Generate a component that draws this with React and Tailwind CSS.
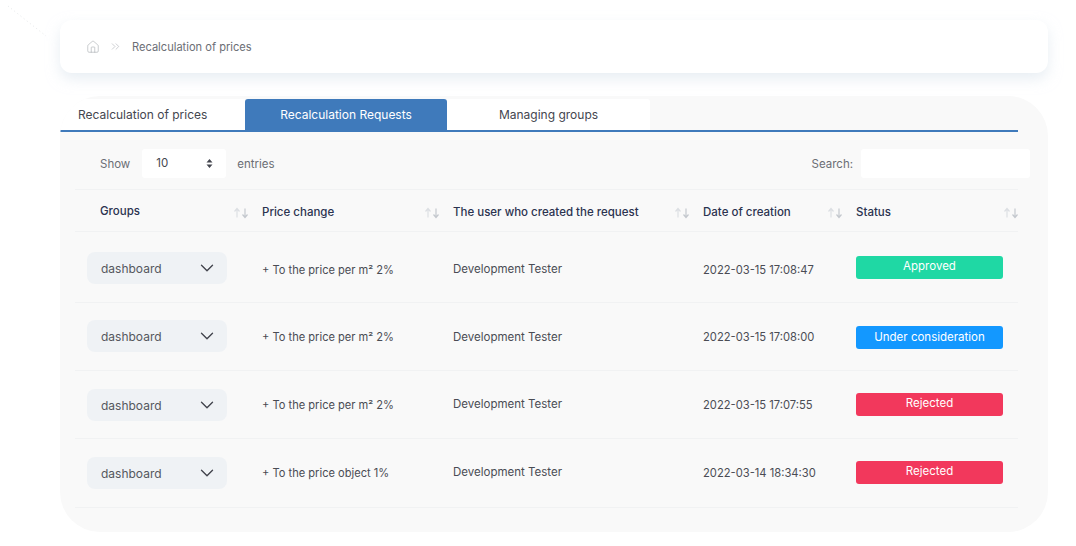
import React from 'react';
import { ChevronDown, ChevronsRight, House } from 'lucide-react';

const font = "font-['Inter','Noto_Sans',sans-serif]";
const grid = 'grid grid-cols-[187px_191px_250px_153px_162px]';

const headers = [
  { label: 'Groups', text: 'pl-[25px] -translate-y-px', icon: 'mr-[13px]' },
  { label: 'Price change', text: '', icon: 'mr-[13px]' },
  { label: 'The user who created the request', text: '', icon: 'mr-[13px]' },
  { label: 'Date of creation', text: '', icon: 'mr-[13px]' },
  { label: 'Status', text: '', icon: '-mr-px' },
];

const rows = [
  { h: 'h-[71px] pt-[6px]', select: '-translate-y-[2px]', price: '+ To the price per m² 2%', date: '2022-03-15 17:08:47', status: 'Approved', color: 'bg-[#1fd8a4]', badge: '-translate-y-[3px]' },
  { h: 'h-[68px] pt-[2px]', select: '-translate-y-[2px]', price: '+ To the price per m² 2%', date: '2022-03-15 17:08:00', status: 'Under consideration', color: 'bg-[#1398ff]', badge: '' },
  { h: 'h-[68px] pt-[1px]', select: '', price: '+ To the price per m² 2%', date: '2022-03-15 17:07:55', status: 'Rejected', color: 'bg-[#f2385c]', badge: '-translate-y-px' },
  { h: 'h-[69px]', select: '', price: '+ To the price object 1%', date: '2022-03-14 18:34:30', status: 'Rejected', color: 'bg-[#f2385c]', badge: '-translate-y-px' },
];

const SortIcon = ({ className }) => (
  <svg width="16" height="12" viewBox="0 0 16 12" fill="none" className={className}>
    <path d="M4 10.500V2M1.500 4.500 4 1.500l2.500 3" stroke="#dcdfe3" strokeWidth="1.2" />
    <path d="M12 1.500V10M9.500 7.500 12 10.500l2.500-3" stroke="#c4c8ce" strokeWidth="1.2" />
  </svg>
);

const App = () => {
  return (
    <div className={`relative w-[1076px] h-[546px] overflow-hidden bg-white pt-5 pl-[60px] ${font}`}>
      {/* faint decoration in the corner */}
      <svg width="50" height="40" className="absolute left-0 top-0">
        <path d="M8 6 46 36" stroke="#e6e8ea" strokeWidth="1" strokeDasharray="1 3" />
      </svg>

      {/* Breadcrumb */}
      <div className="flex items-center w-[988px] h-[53px] rounded-xl bg-white shadow-[0_6px_14px_rgba(214,224,234,0.55)] pl-[26px]">
        <House size={14} strokeWidth={1} className="text-[#a4a8ad]" />
        <ChevronsRight size={13} strokeWidth={1} className="ml-[9px] text-[#a4a8ad]" />
        <span className="ml-[10px] pt-[2px] text-[11.1px] text-[#6b6e75]">Recalculation of prices</span>
      </div>

      {/* Panel */}
      <div className="mt-[23px] w-[988px] h-[436px] rounded-[40px] bg-[#f9f9f9] overflow-hidden pt-[3px]">
        <div className="flex w-[958px] h-[33px] border-b-2 border-[#3f7abb] text-[12px] text-[#44464f]">
          <div className="w-[185px] bg-white pl-[18px] leading-[31px]">Recalculation of prices</div>
          <div className="w-[202px] rounded-t-[3px] bg-[#3f7abb] text-center text-white leading-[31px]">Recalculation Requests</div>
          <div className="w-[203px] rounded-tr-[3px] bg-white text-center leading-[31px]">Managing groups</div>
        </div>

        <div className="ml-[15px] w-[943px]">
          {/* Controls */}
          <div className="flex items-center h-[58px] pt-[6px] border-b border-[#f1f2f3] text-[11.5px] text-[#6b6e75]">
            <span className="ml-[25px] pt-[3px]">Show</span>
            <div className="flex items-center justify-between ml-[12px] w-[84px] h-[29px] rounded-[3px] bg-white pl-[14px] pr-[13px] text-[#44464f]">
              <span className="pt-[1px]">10</span>
              <svg width="7" height="11" viewBox="0 0 7 11" fill="#44464f">
                <path d="M3.500 1 6.500 4.500H.5zM3.500 10 .5 6.500h6z" />
              </svg>
            </div>
            <span className="ml-[11px] pt-[3px]">entries</span>
            <span className="ml-auto pt-[3px]">Search:</span>
            <div className="ml-[8px] -mr-[12px] w-[169px] h-[29px] rounded-[3px] bg-white"></div>
          </div>

          {/* Header */}
          <div className={`${grid} h-[42px] pt-[4px] items-center border-b border-[#f1f2f3] text-[11.5px] font-medium text-[#2b3350]`}>
            {headers.map((col) => (
              <div key={col.label} className="flex items-center justify-between">
                <span className={col.text}>{col.label}</span>
                <SortIcon className={col.icon} />
              </div>
            ))}
          </div>

          {/* Rows */}
          {rows.map((row) => (
            <div key={row.date} className={`${grid} ${row.h} items-center border-b border-[#f1f2f3] text-[11.5px] text-[#4a4c54]`}>
              <div className={`flex items-center justify-between ml-[12px] w-[140px] h-[32px] rounded-[8px] bg-[#eff2f5] pl-[14px] pr-[9px] text-[12px] text-[#55575e] ${row.select}`}>
                <span className="pt-[2px]">dashboard</span>
                <ChevronDown size={22} strokeWidth={1.5} className="text-[#44464f]" />
              </div>
              <div className="text-[11.1px]">{row.price}</div>
              <div>Development Tester</div>
              <div className="text-[11.2px]">{row.date}</div>
              <div className={`flex items-center justify-center w-[147px] h-[23px] rounded-[3px] text-white ${row.color} ${row.badge}`}>
                {row.status}
              </div>
            </div>
          ))}
        </div>
      </div>
    </div>
  );
};

export default App;
